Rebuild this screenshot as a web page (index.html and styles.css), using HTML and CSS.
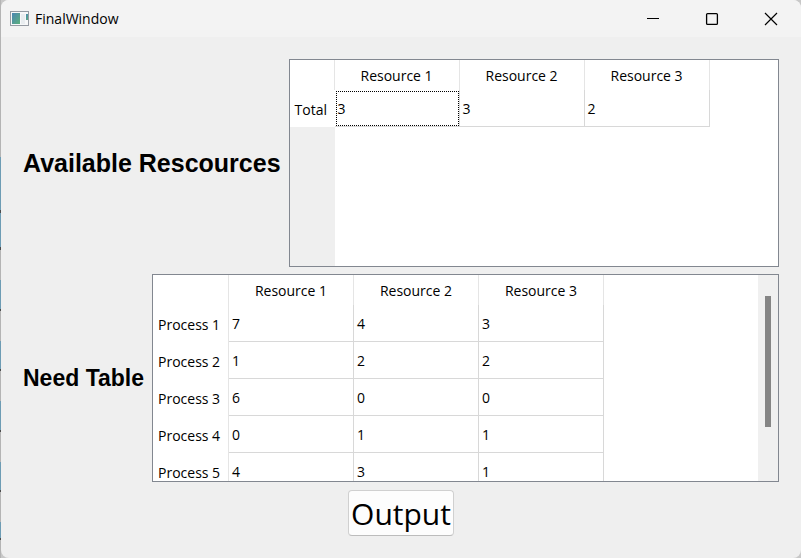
FILE: index.html
```html
<!DOCTYPE html>
<html lang="en">
<head>
<meta charset="utf-8">
<title>FinalWindow</title>
<link rel="stylesheet" href="styles.css">
</head>
<body>
<div class="window">
  <header class="titlebar">
    <svg class="app-icon" width="20" height="16" viewBox="0 0 20 16" aria-hidden="true">
      <defs>
        <linearGradient id="pane" x1="0" y1="0" x2="1" y2="1">
          <stop offset="0" stop-color="#4b86b4"/>
          <stop offset="1" stop-color="#5cb07c"/>
        </linearGradient>
      </defs>
      <rect x=".5" y=".5" width="18" height="14" fill="#f7f8f9" stroke="#959ba3"/>
      <rect x="2" y="2" width="8" height="11" fill="url(#pane)"/>
      <rect x="11" y="3" width="4" height="10" fill="#e9edf0"/>
      <rect x="16" y="3" width="2" height="6" fill="url(#pane)"/>
    </svg>
    <span class="title">FinalWindow</span>
    <button class="caption" type="button" aria-label="Minimize">
      <svg width="14" height="14" viewBox="0 0 14 14"><path d="M1 6.5H13" stroke="#000"/></svg>
    </button>
    <button class="caption" type="button" aria-label="Maximize">
      <svg width="14" height="14" viewBox="0 0 14 14"><rect x="1.6" y="1.6" width="10.8" height="10.8" rx="1" fill="none" stroke="#000" stroke-width="1.3"/></svg>
    </button>
    <button class="caption" type="button" aria-label="Close">
      <svg width="14" height="14" viewBox="0 0 14 14"><path d="M1 1L13 13M13 1L1 13" stroke="#000" stroke-width="1.2"/></svg>
    </button>
  </header>
  <main class="content">
    <section class="row">
      <h2 class="label label-large" id="available">Available Rescources</h2>
      <div class="frame">
        <div class="view view-total">
          <table aria-labelledby="available">
            <colgroup><col class="col-total"><col class="col"><col class="col"><col class="col"></colgroup>
            <thead><tr><td></td><th>Resource 1</th><th>Resource 2</th><th>Resource 3</th></tr></thead>
            <tbody><tr><th>Total</th><td class="current">3</td><td>3</td><td>2</td></tr></tbody>
          </table>
          <div class="header-rest"></div>
        </div>
      </div>
    </section>
    <section class="row">
      <h2 class="label" id="need">Need Table</h2>
      <div class="frame">
        <div class="view">
          <table aria-labelledby="need">
            <colgroup><col class="col-process"><col class="col"><col class="col"><col class="col"></colgroup>
            <thead><tr><td></td><th>Resource 1</th><th>Resource 2</th><th>Resource 3</th></tr></thead>
            <tbody>
              <tr><th>Process 1</th><td>7</td><td>4</td><td>3</td></tr>
              <tr><th>Process 2</th><td>1</td><td>2</td><td>2</td></tr>
              <tr><th>Process 3</th><td>6</td><td>0</td><td>0</td></tr>
              <tr><th>Process 4</th><td>0</td><td>1</td><td>1</td></tr>
              <tr><th>Process 5</th><td>4</td><td>3</td><td>1</td></tr>
            </tbody>
          </table>
        </div>
        <div class="scrollbar"><div class="thumb"></div></div>
      </div>
    </section>
    <button class="output" type="button">Output</button>
  </main>
</div>
</body>
</html>
```
FILE: styles.css
```css
* {
  box-sizing: border-box;
}

body {
  margin: 0;
  padding-left: 1px;
  height: 100vh;
  /* sliver of the desktop showing left of the window */
  background:
    linear-gradient(#b4b4b4 157px, #6d9cb4 157px 210px, #4c4c4c 210px 213px,
      #6d9cb4 213px 247px, #4c4c4c 247px 250px, #b4b4b4 250px 280px,
      #6d9cb4 280px 309px, #4c4c4c 309px 311px, #b4b4b4 311px 341px,
      #6d9cb4 341px 369px, #4c4c4c 369px 371px, #b4b4b4 371px 401px,
      #6d9cb4 401px 430px, #4c4c4c 430px 432px, #b4b4b4 432px 462px,
      #6d9cb4 462px 490px, #4c4c4c 490px 492px, #b4b4b4 492px 522px,
      #6d9cb4 522px 538px, #4c4c4c 538px 540px, #b4b4b4 540px)
    left top / 1px 100% no-repeat #c8c8c8;
  color: #000;
  font-family: "Open Sans", "Noto Sans", sans-serif;
  font-size: 14px;
}

.window {
  display: flex;
  flex-direction: column;
  height: 100%;
  border-radius: 8px;
  overflow: hidden;
  background: #efefef;
}

.titlebar {
  display: flex;
  align-items: center;
  height: 37px;
  padding: 0 1px 0 9px;
  background: #f3f3f3;
}

.title {
  flex: 1;
  margin-left: 5px;
}

.caption {
  display: flex;
  align-items: center;
  justify-content: center;
  width: 59px;
  height: 36px;
  padding: 0;
  border: 0;
  background: none;
}

.content {
  flex: 1;
  min-height: 0;
  display: flex;
  flex-direction: column;
  gap: 7px;
  padding: 22px;
}

.row {
  flex: 1;
  min-height: 0;
  display: flex;
  align-items: center;
  gap: 8px;
}

.label {
  margin: 0;
  font: bold 23px "Liberation Sans", Arial, sans-serif;
  white-space: nowrap;
}

.label-large {
  font-size: 25px;
}

.frame {
  flex: 1;
  align-self: stretch;
  min-width: 0;
  display: flex;
  border: 1px solid #828790;
  background: #fff;
  overflow: hidden;
}

.view {
  flex: 1;
  display: flex;
  flex-direction: column;
  overflow: hidden;
}

table {
  width: max-content;
  table-layout: fixed;
  border-spacing: 0;
}

.col {
  width: 125px;
}

.col-total {
  width: 45px;
}

.col-process {
  width: 76px;
}

th,
td {
  padding: 0;
  font-weight: 400;
  white-space: nowrap;
  border-right: 1px solid #e5e5e5;
}

thead tr {
  height: 30px;
}

tbody tr {
  height: 37px;
}

tbody th {
  padding: 2px 0 0 5px;
  text-align: left;
  border-right-color: #fff;
}

.view:not(.view-total) tbody th {
  border-right-color: #e5e5e5;
}

tbody td {
  padding-left: 3px;
  border-right-color: #d8d8d8;
  border-bottom: 1px solid #d8d8d8;
}

.current {
  outline: 1px dotted #000;
  outline-offset: -2px;
}

.header-rest {
  flex: 1;
  width: 45px;
  background: #efefef;
}

.scrollbar {
  width: 20px;
  padding: 21px 7px 54px;
  background: #f0f0f0;
}

.thumb {
  height: 100%;
  background: #858585;
}

.output {
  align-self: center;
  height: 46px;
  margin-top: 1px;
  padding: 0 2px;
  border: 1px solid #d0d0d0;
  border-bottom-color: #bcbcbc;
  border-radius: 4px;
  background: #fdfdfd;
  color: #000;
  font: 30px "Open Sans", "Noto Sans", sans-serif;
}
```
